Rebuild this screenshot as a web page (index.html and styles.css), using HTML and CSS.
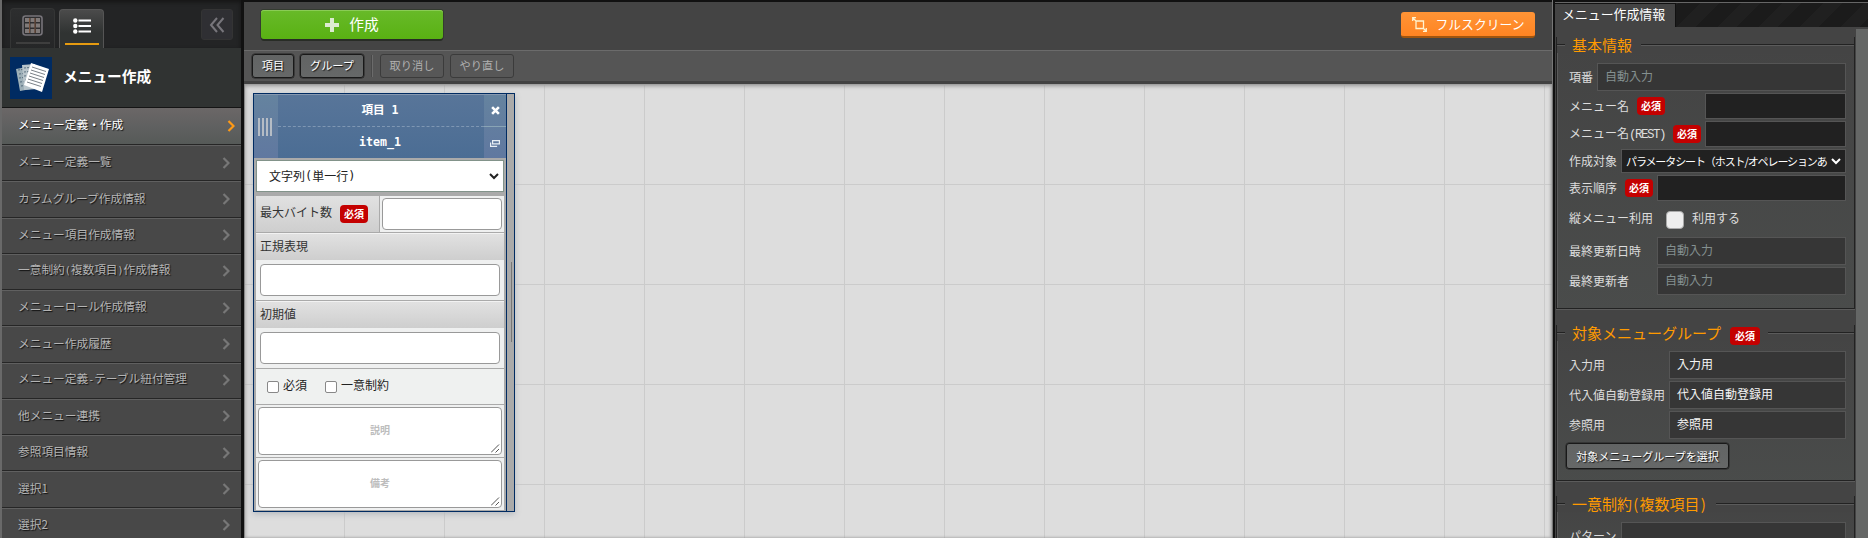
FILE: index.html
```html
<!DOCTYPE html>
<html lang="ja">
<head>
<meta charset="utf-8">
<title>メニュー定義・作成</title>
<link rel="stylesheet" href="styles.css">
</head>
<body>
<div class="app">
  <aside class="side">
    <div class="side-tabs">
      <div class="tab tab-grid">
        <svg width="21" height="21" viewBox="0 0 21 21"><rect x="1" y="1" width="19" height="19" rx="2.5" fill="#2e2e30" stroke="#77747a" stroke-width="1.6"/><path d="M3 3h4v4H3zM8.500 3h4v4h-4zM14 3h4v4h-4zM3 8.500h4v4H3zM8.500 8.500h4v4h-4zM14 8.500h4v4h-4zM3 14h4v4H3zM8.500 14h4v4h-4zM14 14h4v4h-4z" fill="#807a79"/><path d="M7.500 3v15M13 3v15" stroke="#8a5a3f" stroke-width=".8"/></svg>
        <i></i>
      </div>
      <div class="tab tab-list">
        <svg width="18" height="16" viewBox="0 0 18 16"><g fill="#fff"><circle cx="2.300" cy="2.500" r="2.200"/><circle cx="2.300" cy="8" r="2.200"/><circle cx="2.300" cy="13.500" r="2.200"/></g><path d="M5.500 2.500H18M5.500 8H18M5.500 13.500H18" stroke="#fff" stroke-width="1.800"/></svg>
        <i></i>
      </div>
      <div class="collapse"><svg width="16" height="16" viewBox="0 0 16 16" fill="none" stroke="#77757b" stroke-width="2"><path d="M8 1L2 8l6 7M14.500 1l-6 7 6 7"/></svg></div>
    </div>
    <div class="side-title">
      <div class="papers">
        <svg width="42" height="42" viewBox="0 0 42 42"><rect width="42" height="42" fill="#002b62"/>
          <path d="M6 12l11-2 4 22-11 2z" fill="#9eb0b8"/><path d="M8 13l10-1M9 17l9-1M9 21l10-1M10 25l9-1M11 29l8-1" stroke="#53697b" stroke-dasharray="2 1"/>
          <path d="M12 8l13-1 2 25-13 1z" fill="#b9c5cb"/><path d="M14 11l6-.5M14 15l6-.5M14 19l6-.5M15 23l6-.5M15 27l6-.5" stroke="#5d7282" stroke-dasharray="2 1"/>
          <path d="M21 6l18 6-7 23-18-7z" fill="#fff"/><path d="M22 10l14 4.500M21 13l14 4.500M20 16l14 4.500M19 19l14 4.500M18 22l14 4.500M17 25l14 4.500" stroke="#7b8288" stroke-width="1"/></svg>
      </div>
      <span>メニュー作成</span>
    </div>
    <nav class="menu">
      <div class="item active"><span>メニュー定義・作成</span><svg class="chev" viewBox="0 0 8 12"><path d="M1.500 1l5 5-5 5"/></svg></div>
      <div class="item"><span>メニュー定義一覧</span><svg class="chev" viewBox="0 0 8 12"><path d="M1.500 1l5 5-5 5"/></svg></div>
      <div class="item"><span>カラムグループ作成情報</span><svg class="chev" viewBox="0 0 8 12"><path d="M1.500 1l5 5-5 5"/></svg></div>
      <div class="item"><span>メニュー項目作成情報</span><svg class="chev" viewBox="0 0 8 12"><path d="M1.500 1l5 5-5 5"/></svg></div>
      <div class="item"><span>一意制約<b>(</b>複数項目<b>)</b>作成情報</span><svg class="chev" viewBox="0 0 8 12"><path d="M1.500 1l5 5-5 5"/></svg></div>
      <div class="item"><span>メニューロール作成情報</span><svg class="chev" viewBox="0 0 8 12"><path d="M1.500 1l5 5-5 5"/></svg></div>
      <div class="item"><span>メニュー作成履歴</span><svg class="chev" viewBox="0 0 8 12"><path d="M1.500 1l5 5-5 5"/></svg></div>
      <div class="item"><span>メニュー定義<b>-</b>テーブル紐付管理</span><svg class="chev" viewBox="0 0 8 12"><path d="M1.500 1l5 5-5 5"/></svg></div>
      <div class="item"><span>他メニュー連携</span><svg class="chev" viewBox="0 0 8 12"><path d="M1.500 1l5 5-5 5"/></svg></div>
      <div class="item"><span>参照項目情報</span><svg class="chev" viewBox="0 0 8 12"><path d="M1.500 1l5 5-5 5"/></svg></div>
      <div class="item"><span>選択1</span><svg class="chev" viewBox="0 0 8 12"><path d="M1.500 1l5 5-5 5"/></svg></div>
      <div class="item"><span>選択2</span><svg class="chev" viewBox="0 0 8 12"><path d="M1.500 1l5 5-5 5"/></svg></div>
    </nav>
  </aside>

  <main class="main">
    <header class="top">
      <button class="create"><svg width="14" height="14" viewBox="0 0 14 14"><path d="M5 0h4v5h5v4H9v5H5V9H0V5h5z" fill="#dcebd0"/></svg><span>作成</span></button>
      <button class="full"><svg width="15" height="15" viewBox="0 0 15 15" fill="none" stroke="#fff3d0" stroke-width="1.300"><path d="M4 4h7.500v7.500H4zM.7 4V.7H4M.7.7L4 4M14.300 11v3.300H11M14.300 14.300L11.500 11.500"/></svg><span>フルスクリーン</span></button>
    </header>
    <div class="tools">
      <button class="tb w42">項目</button><button class="tb w64">グループ</button><i class="sep"></i><button class="tb w64 off">取り消し</button><button class="tb w64 off">やり直し</button>
    </div>
    <div class="canvas">
      <div class="card">
        <div class="card-in">
          <div class="head">
            <div class="grip"><i></i><i></i><i></i><i></i></div>
            <div class="names"><div>項目 1</div><div>item_1</div></div>
            <div class="acts">
              <div><svg width="9" height="9" viewBox="0 0 8 8"><path d="M1 1l6 6M7 1L1 7" stroke="#fff" stroke-width="2.300"/></svg></div>
              <div><svg width="10" height="7" viewBox="0 0 10 7" fill="none" stroke="#e8eef4" stroke-width="1.200"><path d="M2.600.6h6.800v3.300H2.600zM.6 2.500v3.800h6.500"/></svg></div>
            </div>
          </div>
          <div class="body">
            <div class="sel">文字列<b>(</b>単一行<b>)</b><svg width="10" height="7" viewBox="0 0 10 7"><path d="M1 1l4 4 4-4" fill="none" stroke="#222" stroke-width="2"/></svg></div>
            <div class="bytes"><div class="lab">最大バイト数<em class="req">必須</em></div><div class="cell"><div class="inp"></div></div></div>
            <div class="lab row">正規表現</div>
            <div class="cell2"><div class="inp"></div></div>
            <div class="lab row">初期値</div>
            <div class="cell2"><div class="inp"></div></div>
            <div class="checks"><i></i><span>必須</span><i class="c2"></i><span>一意制約</span></div>
            <div class="ta"><div>説明<svg width="9" height="9" viewBox="0 0 9 9"><path d="M0 8.500L8 .5M4.500 8.500L8 5" stroke="#555" stroke-width="1"/></svg></div></div>
            <div class="ta last"><div>備考<svg width="9" height="9" viewBox="0 0 9 9"><path d="M0 8.500L8 .5M4.500 8.500L8 5" stroke="#555" stroke-width="1"/></svg></div></div>
          </div>
        </div>
        <div class="resize"><i></i></div>
      </div>
    </div>
  </main>

  <section class="panel">
    <div class="ptabs"><div class="ptab">メニュー作成情報</div></div>
    <div class="pwrap">
      <div class="pbody">
        <div class="fs fs1">
          <div class="lg"><i></i><span>基本情報</span><i class="r"></i></div>
          <div class="fr m28"><label>項番</label><div class="f ro w249">自動入力</div></div>
          <div class="fr m26"><label>メニュー名</label><em class="req">必須</em><div class="f w141"></div></div>
          <div class="fr m26"><label>メニュー名<b>(REST)</b></label><em class="req">必須</em><div class="f w141"></div></div>
          <div class="fr m24"><label>作成対象</label><div class="f psel">パラメータシート（ホスト/オペレーションあ<svg width="10" height="7" viewBox="0 0 10 7"><path d="M1 1l4 4 4-4" fill="none" stroke="#fff" stroke-width="2"/></svg></div></div>
          <div class="fr m26"><label>表示順序</label><em class="req">必須</em><div class="f w189"></div></div>
          <div class="fr chk"><label>縦メニュー利用</label><i></i><span>利用する</span></div>
          <div class="fr m28"><label>最終更新日時</label><div class="f ro w189">自動入力</div></div>
          <div class="fr m28"><label>最終更新者</label><div class="f ro w189">自動入力</div></div>
        </div>
        <div class="fs fs2">
          <div class="lg"><i></i><span>対象メニューグループ</span><em class="req big">必須</em><i class="r"></i></div>
          <div class="fr m28"><label>入力用</label><div class="f ro lt w177">入力用</div></div>
          <div class="fr m28"><label>代入値自動登録用</label><div class="f ro lt w177">代入値自動登録用</div></div>
          <div class="fr m28"><label>参照用</label><div class="f ro lt w177">参照用</div></div>
          <button class="tb pick">対象メニューグループを選択</button>
        </div>
        <div class="fs fs3">
          <div class="lg"><i></i><span>一意制約<b>(</b>複数項目<b>)</b></span><i class="r"></i></div>
          <div class="fr m28"><label>パターン</label><div class="f ro w225"></div></div>
        </div>
      </div>
      <div class="scroll"></div>
    </div>
  </section>
</div>
</body>
</html>
```
FILE: styles.css
```css
* { box-sizing: border-box; }
body { margin: 0; width: 1868px; height: 538px; overflow: hidden; background: #111; font-family: "Noto Sans CJK JP", sans-serif; font-size: 12px; line-height: 1; white-space: nowrap; }
button { font-family: inherit; padding: 0; margin: 0; line-height: 1; }
i, em { font-style: normal; flex: none; }
svg { flex: none; display: block; }
.app { display: flex; height: 538px; overflow: hidden; }

/* side menu */
.side { width: 244px; flex: none; border-left: 2px solid #696969; border-right: 3px solid #111; background: #484848; overflow: hidden; }
.side-tabs { height: 48px; background: #232425; display: flex; align-items: flex-end; padding-left: 8px; box-shadow: inset 0 2px 4px #151515; }
.tab { width: 45px; height: 40px; border: 1px solid #343535; border-bottom: 0; border-radius: 4px 4px 0 0; display: flex; flex-direction: column; align-items: center; background: linear-gradient(#2d2e2f, #252627); }
.tab svg { margin-top: 6px; }
.tab i { width: 34px; height: 2px; background: #3e3e3e; margin-top: 6px; }
.tab-list { margin-left: 4px; height: 39px; border-color: #555; background: linear-gradient(#4b4b4b, #303332 60%); }
.tab-list svg { margin-top: 8px; }
.tab-list i { background: #e69b10; margin-top: 9px; }
.collapse { width: 32px; height: 31px; margin: 0 0 8px 97px; background: #2f2f33; border: 1px solid #343434; border-radius: 3px; display: flex; align-items: center; justify-content: center; }
.side-title { height: 60px; background: #303332; border-bottom: 1px solid #151515; display: flex; align-items: center; padding-left: 8px; color: #fff; font-weight: 700; font-size: 14.7px; }
.side-title span { margin: 0 0 2px 11px; }
.item { height: 36.25px; border-top: 1px solid #606060; border-bottom: 1px solid #262626; display: flex; align-items: center; justify-content: space-between; padding: 0 11px 1px 16px; color: #b4b4b4; font-size: 11.7px; text-shadow: 1px 1px 1px #111; background: #484848; }
.item span { margin-bottom: 3px; }
.item b { font: 400 10px "DejaVu Sans Mono", monospace; }
.item.active { height: 37px; border-top: 0; background: linear-gradient(#6b6767, #5f6060 55%, #565a58); color: #fff; }
.chev { width: 8px; height: 12px; fill: none; stroke: #777; stroke-width: 2.2; }
.active .chev { stroke: #ff9a16; margin-right: -5px; }

/* main area */
.main { width: 1309px; flex: none; display: flex; flex-direction: column; }
.top { height: 50px; border-top: 2px solid #111; background: #444; display: flex; justify-content: space-between; padding: 8px 18px 0 17px; }
.top button { border: 0; color: #fff; display: flex; align-items: center; justify-content: center; }
.create { width: 182px; height: 29px; border-radius: 3px; background: linear-gradient(#68ba29, #59b113); box-shadow: 0 2px 0 #282c26, 0 0 0 1px #343b30, inset 0 1px #8acc55; font-size: 14.7px; gap: 10px; }
.top .full { width: 134px; height: 26px; margin: 2px 0 0 0; border-radius: 3px; background: linear-gradient(#ff9436, #ff8422); border-bottom: 2px solid #a0550f; font-size: 12.8px; gap: 9px; }
.tools { height: 34px; background: #555; border-top: 1px solid #6b6b6b; border-bottom: 3px solid #414141; display: flex; padding: 3px 0 0 8px; }
.tb { height: 24px; border: 1px solid #191919; border-radius: 3px; background: linear-gradient(#626464, #666868); color: #fff; font-size: 11.2px; text-shadow: 1px 1px 1px #111; margin-right: 6px; box-shadow: 0 0 0 .5px #222; }
.w42 { width: 42px; }
.w64 { width: 64px; }
.sep { width: 2px; height: 22px; margin: 1px 7px 0 1px; background: #484848; border-right: 1px solid #6b6b6b; }
.off { background: #575757; border-color: #3b3b3b; color: #b0b0b0; box-shadow: none; text-shadow: none; }
.canvas { height: 454px; border-left: 1px solid #888; background: linear-gradient(90deg, transparent 99px, #cbcbcb 99px) 0 0 / 100px 100px, linear-gradient(transparent 99px, #cbcbcb 99px) 0 1px / 100px 100px, #ddd; box-shadow: inset 0 2px 4px #999, inset -2px 0 3px #999; padding: 9px 0 0 8px; }

/* item card */
.card { display: flex; width: 262px; height: 419px; border: 1px solid #002b62; background: #aaa; box-shadow: 0 2px 6px #b4b8be; }
.card-in { width: 253px; border-right: 1px solid #002b62; display: flex; flex-direction: column; }
.head { height: 64px; flex: none; display: flex; background: linear-gradient(#587599, #4b6d94); border-top: 1px solid #8899b0; }
.grip { width: 24px; background: linear-gradient(#65839f, #6078a0); display: flex; align-items: center; justify-content: center; gap: 2px; padding-right: 2px; }
.grip i { width: 2px; height: 18px; background: #b5bcc5; }
.names { flex: 1; color: #fff; font-family: "DejaVu Sans Mono", "Noto Sans CJK JP", monospace; font-weight: 700; font-size: 11.6px; text-align: center; }
.names div { height: 32px; padding-top: 10px; padding-right: 2px; }
.names div:first-child { border-bottom: 1px dashed #7f97b3; }
.acts { width: 22px; background: linear-gradient(#65839f, #6078a0); }
.acts div { height: 32px; display: flex; align-items: center; justify-content: center; }
.acts div:first-child { border-bottom: 1px solid #89a4b5; }
.body { padding: 0 2px; flex: 1; color: #222; }
.sel { height: 32px; margin: 2px 0 4px; border: 1px solid #82938a; background: #fff; display: flex; align-items: center; padding: 0 4px 0 12px; }
.sel b { font: 400 12px "DejaVu Sans Mono", monospace; }
.sel svg { margin-left: auto; }
.lab { background: linear-gradient(#e1e1e1, #cecece); display: flex; align-items: center; padding: 0 0 2px 4px; color: #333; }
.bytes { height: 37px; display: flex; border-bottom: 1px solid #aaa; background: #eff0f0; }
.bytes .lab { width: 124px; border-right: 1px solid #aaa; padding-bottom: 4px; }
.req { display: inline-flex; align-items: center; justify-content: center; width: 28px; height: 18px; border-radius: 4px; background: #c40000; color: #fff; font-size: 10px; font-weight: 700; margin-left: 8px; }
.bytes .req { margin-top: 4px; }
.inp { background: #fff; border: 1px solid #999; border-radius: 4px; height: 32px; }
.cell { flex: 1; padding: 2px; }
.row { height: 27px; border-top: 1px solid #f2f2f2; }
.cell2 { height: 41px; padding: 4px; background: #eff0f0; border-bottom: 1px solid #aaa; }
.checks { height: 36px; background: #eff1f0; border-bottom: 1px solid #aaa; display: flex; align-items: center; padding: 0 0 3px 11px; }
.checks i { width: 12px; height: 12px; border: 1px solid #888; border-radius: 2px; background: #fff; margin: 4px 4px 0 0; }
.checks .c2 { margin-left: 18px; }
.ta { height: 53px; padding: 2px; background: #eff0f0; border-bottom: 1px solid #aaa; }
.ta div { height: 48px; background: #fff; border: 1px solid #999; border-radius: 4px; display: flex; align-items: center; justify-content: center; color: #bdbdbd; font-weight: 700; font-size: 10px; padding-bottom: 2px; position: relative; }
.ta svg { position: absolute; right: 1px; bottom: 1px; }
.resize { width: 7px; display: flex; align-items: center; justify-content: center; padding: 0 0 1px 1px; }
.resize i { width: 1px; height: 80px; background: #777; }

/* settings panel */
.panel { width: 315px; flex: none; border-left: 2px solid #111; box-shadow: -1px 0 #777; background: #444; border-top: 2px solid #111; }
.ptabs { height: 25px; border-top: 1px solid #666; background: repeating-linear-gradient(135deg, #1b1b1b 0 16px, #202020 16px 29px); }
.ptab { width: 121px; height: 24px; border-top: 1px solid #111; border-right: 1px solid #111; background: #444; color: #fff; font-size: 12.9px; padding: 4px 0 0 7px; }
.pwrap { display: flex; height: 511px; }
.pbody { width: 301px; padding: 10px 1px 0 1px; }
.scroll { flex: 1; margin-top: 2px; background: #656766; }
.fs { border: 1px solid #222; border-top: 0; padding: 0 8px 0 12px; background: linear-gradient(#444, #4a4c4b) 0 8px no-repeat; box-shadow: inset 1px 0 #5b5b5b, 0 1px #5b5b5b; }
.fs1 { height: 272px; }
.fs2 { height: 156px; margin-top: 16px; }
.fs3 { height: 80px; margin-top: 15px; }
.fs .lg { height: 16px; margin: 0 -8px 10px -12px; display: flex; align-items: center; color: #ff9a00; font-size: 15px; background: #444; }
.lg i { width: 8px; height: 2px; background: #222; border-bottom: 1px solid #5b5b5b; }
.lg span { margin: 0 9px 1px 7px; }
.lg b { display: inline-block; width: 7.5px; font-weight: inherit; text-align: center; }
.lg .r { width: auto; flex: 1; }
.lg .big { width: 30px; margin: 5px 8px 0 0; }
.fr { display: flex; align-items: center; color: #ddd; margin-bottom: 2px; }
.m28 { height: 28px; }
.m26 { height: 26px; }
.m24 { height: 24px; }
.fr label b { font: 400 12.5px "Liberation Mono", monospace; letter-spacing: -1.5px; }
.f { margin-left: auto; height: 100%; border: 1px solid #555; background: #212121; display: flex; align-items: center; color: #fff; }
.f.ro { background: #363636; color: #849090; padding: 0 0 2px 7px; }
.f.lt { color: #f4f4f4; }
.w141 { width: 141px; }
.w177 { width: 177px; }
.w189 { width: 189px; }
.w225 { width: 225px; }
.w249 { width: 249px; }
.psel { width: 225px; padding-left: 4px; font-size: 11px; letter-spacing: -1.1px; }
.psel svg { margin: 0 4px 0 auto; }
.chk { height: 32px; }
.chk i { width: 18px; height: 18px; border: 1px solid #aaa; border-radius: 4px; background: #eee; margin: 1px 8px 0 13px; }
.chk label, .chk span { padding-bottom: 2px; }
.fs1 .chk { margin-bottom: 2px; }
.pick { width: 163px; height: 26px; margin: 2px 0 0 -3px; font-size: 11px; }
```
